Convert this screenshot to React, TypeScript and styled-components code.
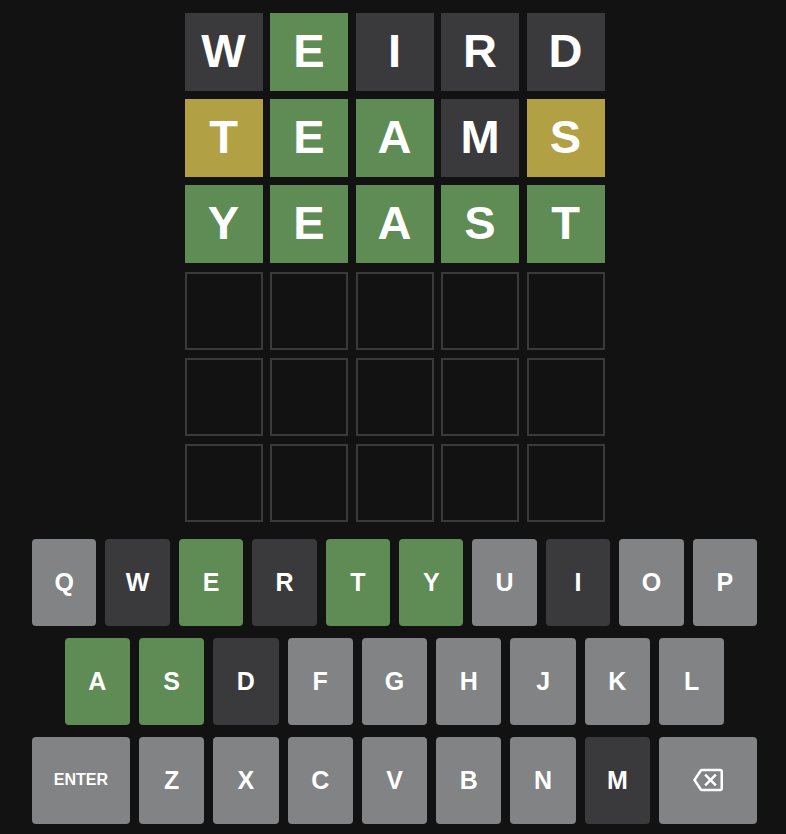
import styled, { createGlobalStyle } from 'styled-components';

type TileState = 'correct' | 'present' | 'absent' | 'empty';
type KeyState = TileState | 'unused';

const COLORS = {
  correct: '#5f8b55',
  present: '#b2a044',
  absent: '#3a3a3c',
  unused: '#818384',
  empty: 'transparent',
};

const GUESSES: { word: string; states: TileState[] }[] = [
  { word: 'WEIRD', states: ['absent', 'correct', 'absent', 'absent', 'absent'] },
  { word: 'TEAMS', states: ['present', 'correct', 'correct', 'absent', 'present'] },
  { word: 'YEAST', states: ['correct', 'correct', 'correct', 'correct', 'correct'] },
];

const TOTAL_ROWS = 6;

const KEY_STATES: Record<string, KeyState> = {
  W: 'absent',
  E: 'correct',
  R: 'absent',
  T: 'correct',
  Y: 'correct',
  I: 'absent',
  A: 'correct',
  S: 'correct',
  D: 'absent',
  M: 'absent',
};

const GlobalStyle = createGlobalStyle`
  html, body {
    margin: 0;
    padding: 0;
    background: #121213;
  }
  body {
    font-family: "Liberation Sans", Arial, sans-serif;
    color: #ffffff;
  }
`;

const App = (): JSX.Element => {
  const emptyRows = TOTAL_ROWS - GUESSES.length;

  return (
    <>
      <GlobalStyle />
      <Page>
        <Board>
          {GUESSES.map((guess) => (
            <BoardRow key={guess.word}>
              {guess.word.split('').map((letter, index) => (
                <Tile key={`${guess.word}-${index}`} $state={guess.states[index]}>
                  {letter}
                </Tile>
              ))}
            </BoardRow>
          ))}
          {Array.from({ length: emptyRows }).map((_, rowIndex) => (
            <BoardRow key={`empty-${rowIndex}`}>
              {Array.from({ length: 5 }).map((__, index) => (
                <Tile key={index} $state="empty" />
              ))}
            </BoardRow>
          ))}
        </Board>

        <Keyboard>
          <KeyRow>
            {'QWERTYUIOP'.split('').map((letter) => (
              <Key key={letter} $state={KEY_STATES[letter] || 'unused'}>
                {letter}
              </Key>
            ))}
          </KeyRow>
          <KeyRow>
            <Spacer />
            {'ASDFGHJKL'.split('').map((letter) => (
              <Key key={letter} $state={KEY_STATES[letter] || 'unused'}>
                {letter}
              </Key>
            ))}
            <Spacer />
          </KeyRow>
          <KeyRow>
            <Key $state="unused" $wide $small>
              ENTER
            </Key>
            {'ZXCVBNM'.split('').map((letter) => (
              <Key key={letter} $state={KEY_STATES[letter] || 'unused'}>
                {letter}
              </Key>
            ))}
            <Key $state="unused" $wide aria-label="backspace">
              <BackspaceIcon />
            </Key>
          </KeyRow>
        </Keyboard>
      </Page>
    </>
  );
};

// material-style backspace glyph
const BackspaceIcon = () => (
  <svg width="30" height="30" viewBox="0 0 24 24" aria-hidden="true">
    <path
      fill="#ffffff"
      d="M22 3H7c-.69 0-1.23.35-1.59.88L0 12l5.41 8.11c.36.53.9.89 1.59.89h15c1.1 0 2-.9 2-2V5c0-1.1-.9-2-2-2zm0 16H7.07L2.4 12l4.66-7H22v14zm-11.59-2L14 13.41 17.59 17 19 15.59 15.41 12 19 8.41 17.59 7 14 10.59 10.41 7 9 8.41 12.59 12 9 15.59z"
    />
  </svg>
);

const Page = styled.div`
  display: flex;
  flex-direction: column;
  align-items: center;
  padding: 13px 0 0 3px;
  box-sizing: border-box;
  min-height: 834px;
`;

const Board = styled.div`
  display: grid;
  grid-template-rows: repeat(6, 78px);
  row-gap: 8.2px;
  width: 420px;
`;

const BoardRow = styled.div`
  display: grid;
  grid-template-columns: repeat(5, 78px);
  column-gap: 7.5px;
`;

const Tile = styled.div<{ $state: TileState }>`
  box-sizing: border-box;
  width: 78px;
  height: 78px;
  display: flex;
  align-items: center;
  justify-content: center;
  background: ${({ $state }) => COLORS[$state]};
  border: ${({ $state }) => ($state === 'empty' ? '2px solid #3a3a3c' : 'none')};
  font-size: 47px;
  font-weight: 700;
  line-height: 1;
  text-transform: uppercase;
  padding-bottom: 3px;
`;

const Keyboard = styled.div`
  width: 725px;
  margin-top: 17px;
  display: flex;
  flex-direction: column;
  gap: 12px;
`;

const KeyRow = styled.div`
  display: flex;
  width: 100%;
`;

const Spacer = styled.div`
  flex: 0.5;
`;

const Key = styled.button<{ $state: KeyState; $wide?: boolean; $small?: boolean }>`
  flex: ${({ $wide }) => ($wide ? 1.5 : 1)};
  height: 87px;
  margin: 0 9px 0 0;
  padding: 0;
  border: 0;
  border-radius: 4px;
  background: ${({ $state }) => COLORS[$state]};
  color: #ffffff;
  font-family: "Liberation Sans", Arial, sans-serif;
  font-weight: 700;
  font-size: ${({ $small }) => ($small ? '16px' : '25px')};
  display: flex;
  align-items: center;
  justify-content: center;
  cursor: pointer;

  &:last-of-type {
    margin-right: 0;
  }
`;

export default App;
